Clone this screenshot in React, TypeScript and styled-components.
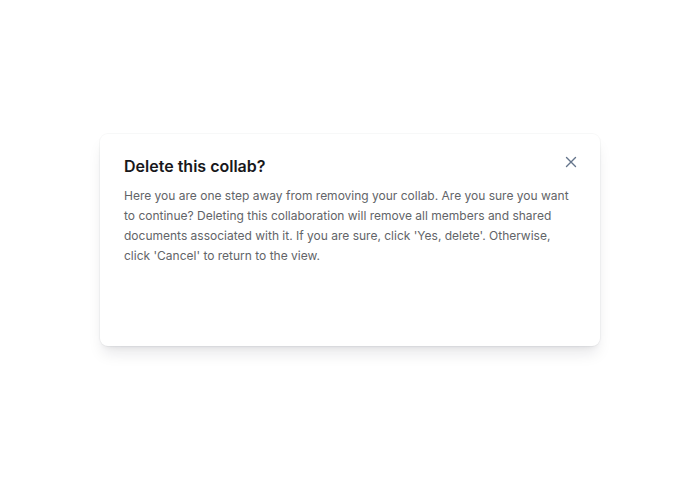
import React from "react";
import styled, { createGlobalStyle } from "styled-components";

const GlobalStyle = createGlobalStyle`
  html, body { margin: 0; padding: 0; background: #ffffff; }
  body { font-family: Inter, "Noto Sans", sans-serif; -webkit-font-smoothing: antialiased; }
`;

const Page = styled.div`
  width: 700px;
  height: 480px;
  display: flex;
  justify-content: center;
  align-items: flex-start;
  padding-top: 134px;
  box-sizing: border-box;
`;

const Dialog = styled.div`
  position: relative;
  width: 500px;
  height: 212px;
  box-sizing: border-box;
  background: #ffffff;
  border-radius: 8px;
  padding: 20px 24px 24px 24px;
  box-shadow: 0 10px 15px -3px rgba(15, 23, 42, 0.1), 0 4px 6px -4px rgba(15, 23, 42, 0.1), 0 0 0 1px rgba(15, 23, 42, 0.03);
  display: flex;
  flex-direction: column;
  gap: 8px;
`;

const Title = styled.h2`
  margin: 0;
  font-size: 16px;
  line-height: 24px;
  font-weight: 600;
  color: #18181b;
`;

const Body = styled.p`
  margin: 0;
  font-size: 12px;
  line-height: 20px;
  font-weight: 400;
  color: #626468;
`;

const CloseButton = styled.button`
  position: absolute;
  top: 16px;
  right: 17px;
  width: 24px;
  height: 24px;
  padding: 0;
  border: none;
  background: transparent;
  display: flex;
  align-items: center;
  justify-content: center;
  color: #64748b;
  cursor: pointer;
`;

export default function App() {
  return (
    <>
      <GlobalStyle />
      <Page>
        <Dialog role="dialog">
          <Title>Delete this collab?</Title>
          <Body>
            Here you are one step away from removing your collab. Are you sure you want
            to continue? Deleting this collaboration will remove all members and shared
            documents associated with it. If you are sure, click 'Yes, delete'. Otherwise,
            click 'Cancel' to return to the view.
          </Body>
          <CloseButton aria-label="Close">
            <svg width="12" height="12" viewBox="0 0 12 12" fill="none">
              <path d="M1.5 1.5L10.5 10.5M10.5 1.5L1.5 10.5" stroke="currentColor" strokeWidth="1.4" strokeLinecap="round" />
            </svg>
          </CloseButton>
        </Dialog>
      </Page>
    </>
  );
}
